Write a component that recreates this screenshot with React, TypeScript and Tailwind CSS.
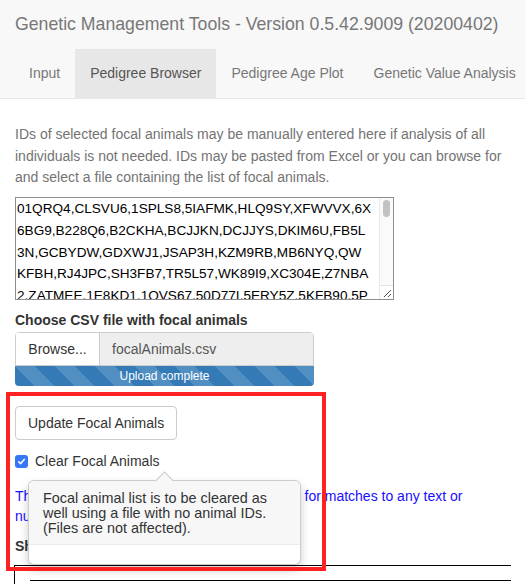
const TABS = ['Input', 'Pedigree Browser', 'Pedigree Age Plot', 'Genetic Value Analysis']

const ID_LINES = [
  '01QRQ4,CLSVU6,1SPLS8,5IAFMK,HLQ9SY,XFWVVX,6X',
  '6BG9,B228Q6,B2CKHA,BCJJKN,DCJJYS,DKIM6U,FB5L',
  '3N,GCBYDW,GDXWJ1,JSAP3H,KZM9RB,MB6NYQ,QW',
  'KFBH,RJ4JPC,SH3FB7,TR5L57,WK89I9,XC304E,Z7NBA',
  '2,ZATMEE,1E8KD1,1QVS67,50D77I,5ERY5Z,5KFB90,5P',
]

function FakeTextarea() {
  return (
    <div className="flex h-[103px] w-[379px] border border-[#8e8e8e] bg-white">
      <div className="flex-1 overflow-hidden pl-[1px] text-[13.6px] leading-[21.7px] text-black">
        {ID_LINES.map((l) => (
          <div key={l} className="whitespace-nowrap">
            {l}
          </div>
        ))}
      </div>
      <div className="flex w-[14px] flex-col border-l border-[#e9e9e9] bg-[#fafafa]">
        <div className="flex-1 pt-[2px]">
          <div className="mx-auto h-[17px] w-[7px] rounded-full bg-[#c2c2c2]" />
        </div>
        <div className="flex h-[14px] items-end justify-end border-t border-[#e2e2e2] bg-white">
          <svg width="9" height="9" viewBox="0 0 9 9" className="mb-[1px] mr-[1px]">
            <path d="M8 1L1 8M8 5L5 8" stroke="#555" strokeWidth="1" />
          </svg>
        </div>
      </div>
    </div>
  )
}

function Popover() {
  return (
    <div className="absolute left-[28px] top-[480px] w-[273px] rounded-[6px] border border-[rgba(0,0,0,0.2)] bg-white shadow-[0_5px_10px_rgba(0,0,0,0.2)]">
      <div className="absolute left-[129px] top-[-7px] h-[13px] w-[13px] rotate-45 border-l border-t border-[rgba(0,0,0,0.18)] bg-[#f7f7f7]" />
      <div className="relative rounded-t-[5px] border-b border-[#ebebeb] bg-[#f7f7f7] px-[14px] pb-[9px] pt-[10px] text-[14.4px] leading-[14.8px] text-[#333]">
        Focal animal list is to be cleared as well using a file with no animal IDs. (Files are not affected).
      </div>
      <div className="h-[19px]" />
    </div>
  )
}

export default function App() {
  return (
    <div className="relative h-[584px] w-[525px] overflow-hidden bg-white font-['Liberation_Sans',Helvetica,Arial,sans-serif]">
      <header className="border-b border-[#e7e7e7] bg-[#f8f8f8]">
        <div className="flex h-[49px] items-center whitespace-nowrap px-[15px] text-[17.7px] text-[#777]">
          Genetic Management Tools - Version 0.5.42.9009 (20200402)
        </div>
        <nav className="flex h-[49px] whitespace-nowrap pl-[14px] text-[14px]">
          {TABS.map((t) => (
            <div
              key={t}
              className={
                t === 'Pedigree Browser'
                  ? 'flex items-center bg-[#e7e7e7] px-[15px] text-[#555]'
                  : 'flex items-center px-[15px] text-[#777]'
              }
            >
              {t}
            </div>
          ))}
        </nav>
      </header>

      <main className="px-[15px] pt-[25px] text-[14px] text-[#333]">
        <p className="leading-[21.7px] text-[#737373]">
          IDs of selected focal animals may be manually entered here if analysis of all individuals is not needed. IDs may be pasted from Excel or you can browse for and select a file containing the list of focal animals.
        </p>

        <div className="mt-[8px]">
          <FakeTextarea />
        </div>

        <div className="mt-[10px] font-bold leading-[20px]">Choose CSV file with focal animals</div>

        <div className="mt-[2px] w-[299px]">
          <div className="flex h-[34px] rounded-t-[4px] border border-[#ccc]">
            <div className="flex w-[84px] items-center justify-center border-r border-[#ccc] bg-white text-[#333]">
              Browse...
            </div>
            <div className="flex flex-1 items-center bg-[#eee] px-[12px] text-[#555]">focalAnimals.csv</div>
          </div>
          <div className="flex h-[20px] items-center justify-center rounded-b-[4px] bg-[#337ab7] bg-[linear-gradient(45deg,rgba(255,255,255,0.15)_25%,transparent_25%,transparent_50%,rgba(255,255,255,0.15)_50%,rgba(255,255,255,0.15)_75%,transparent_75%,transparent)] bg-[length:40px_40px] text-[12px] text-white">
            Upload complete
          </div>
        </div>

        <button
          type="button"
          className="mt-[20px] h-[34px] rounded-[4px] border border-[#ccc] bg-white px-[12px] text-[14px] text-[#333]"
        >
          Update Focal Animals
        </button>

        <label className="mt-[11px] flex items-center gap-[7px] leading-[20px]">
          <span className="flex h-[13px] w-[13px] items-center justify-center rounded-[3px] bg-[#3478f6]">
            <svg width="9" height="9" viewBox="0 0 9 9">
              <path d="M1.8 4.8L3.7 6.6L7.2 2.4" fill="none" stroke="white" strokeWidth="1.6" strokeLinecap="round" strokeLinejoin="round" />
            </svg>
          </span>
          <span className="text-[14px] text-[#333]">Clear Focal Animals</span>
        </label>

        <p className="mt-[15px] leading-[20px] text-[#1a0dff]">
          The pedigree tree can be filtered by searching for matches to any text or numbers in the table.
        </p>

        <div className="mt-[10px] font-bold leading-[20px]">Show pedigree for focal animals</div>
      </main>

      <div className="mx-[14px] mt-[9px] border-l border-t border-black pl-[15px] pt-[14px]">
        <div className="h-[20px] border-t border-black" />
      </div>

      <Popover />

      <div className="absolute left-[6px] top-[392px] h-[179px] w-[320px] border-[4px] border-[#ff2222]" />
    </div>
  )
}
